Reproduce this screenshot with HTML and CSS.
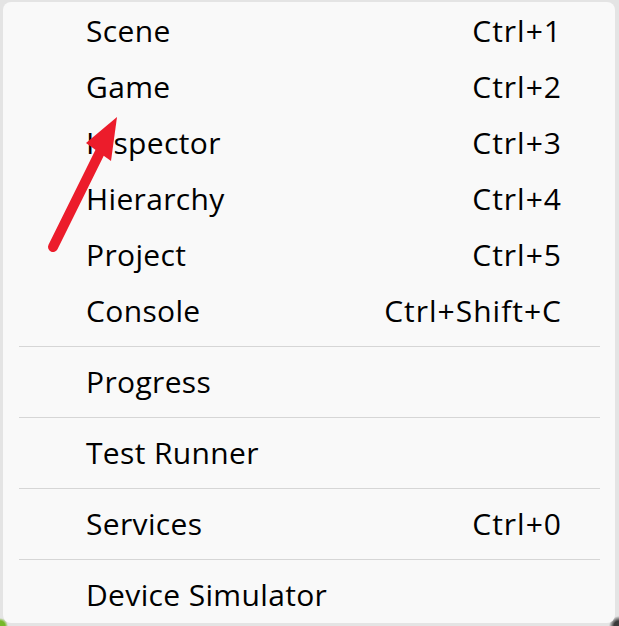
FILE: index.html
```html
<!DOCTYPE html>
<html>
<head>
<meta charset="utf-8">
<link rel="stylesheet" href="styles.css">
</head>
<body>
<div class="menu">
  <div class="item"><span class="label">Scene</span><span class="key">Ctrl+1</span></div>
  <div class="item"><span class="label">Game</span><span class="key">Ctrl+2</span></div>
  <div class="item"><span class="label">Inspector</span><span class="key">Ctrl+3</span></div>
  <div class="item"><span class="label">Hierarchy</span><span class="key">Ctrl+4</span></div>
  <div class="item"><span class="label">Project</span><span class="key">Ctrl+5</span></div>
  <div class="item"><span class="label">Console</span><span class="key">Ctrl+Shift+C</span></div>
  <div class="sep"></div>
  <div class="item"><span class="label">Progress</span></div>
  <div class="sep"></div>
  <div class="item"><span class="label">Test Runner</span></div>
  <div class="sep"></div>
  <div class="item"><span class="label">Services</span><span class="key">Ctrl+0</span></div>
  <div class="sep"></div>
  <div class="item"><span class="label">Device Simulator</span></div>
</div>
<svg class="arrow" width="619" height="626" viewBox="0 0 619 626">
  <line x1="53" y1="247" x2="101" y2="150" stroke="#ec1c2b" stroke-width="10" stroke-linecap="round"/>
  <polygon points="117,117 86,143 111,161" fill="#ec1c2b"/>
</svg>
</body>
</html>
```
FILE: styles.css
```css
html, body {
  margin: 0;
  padding: 0;
}
body {
  background-color: #e4e4e4;
  background-image:
    radial-gradient(circle at 0 100%, #76b82a 5px, transparent 8px),
    radial-gradient(circle at 100% 100%, #3a3a3a 5px, transparent 10px);
  width: 619px;
  height: 626px;
  overflow: hidden;
  padding: 2px 4px 3px 3px;
  box-sizing: border-box;
  font-family: "Open Sans", "Noto Sans", sans-serif;
}
.menu {
  background: #f9f9f9;
  border-radius: 8px;
  height: 621px;
  padding-top: 1px;
  box-sizing: border-box;
  display: flex;
  flex-direction: column;
  color: #000;
}
.item {
  height: 56px;
  display: flex;
  align-items: center;
  justify-content: space-between;
  padding: 0 53px 0 83px;
  font-size: 30px;
  line-height: 56px;
}
.label {
  letter-spacing: 0.35px;
}
.key {
  letter-spacing: 1px;
}
.sep {
  height: 1px;
  background: #d6d6d6;
  margin: 7px 15px 7px 16px;
}
.arrow {
  position: absolute;
  left: 0;
  top: 0;
}
```
